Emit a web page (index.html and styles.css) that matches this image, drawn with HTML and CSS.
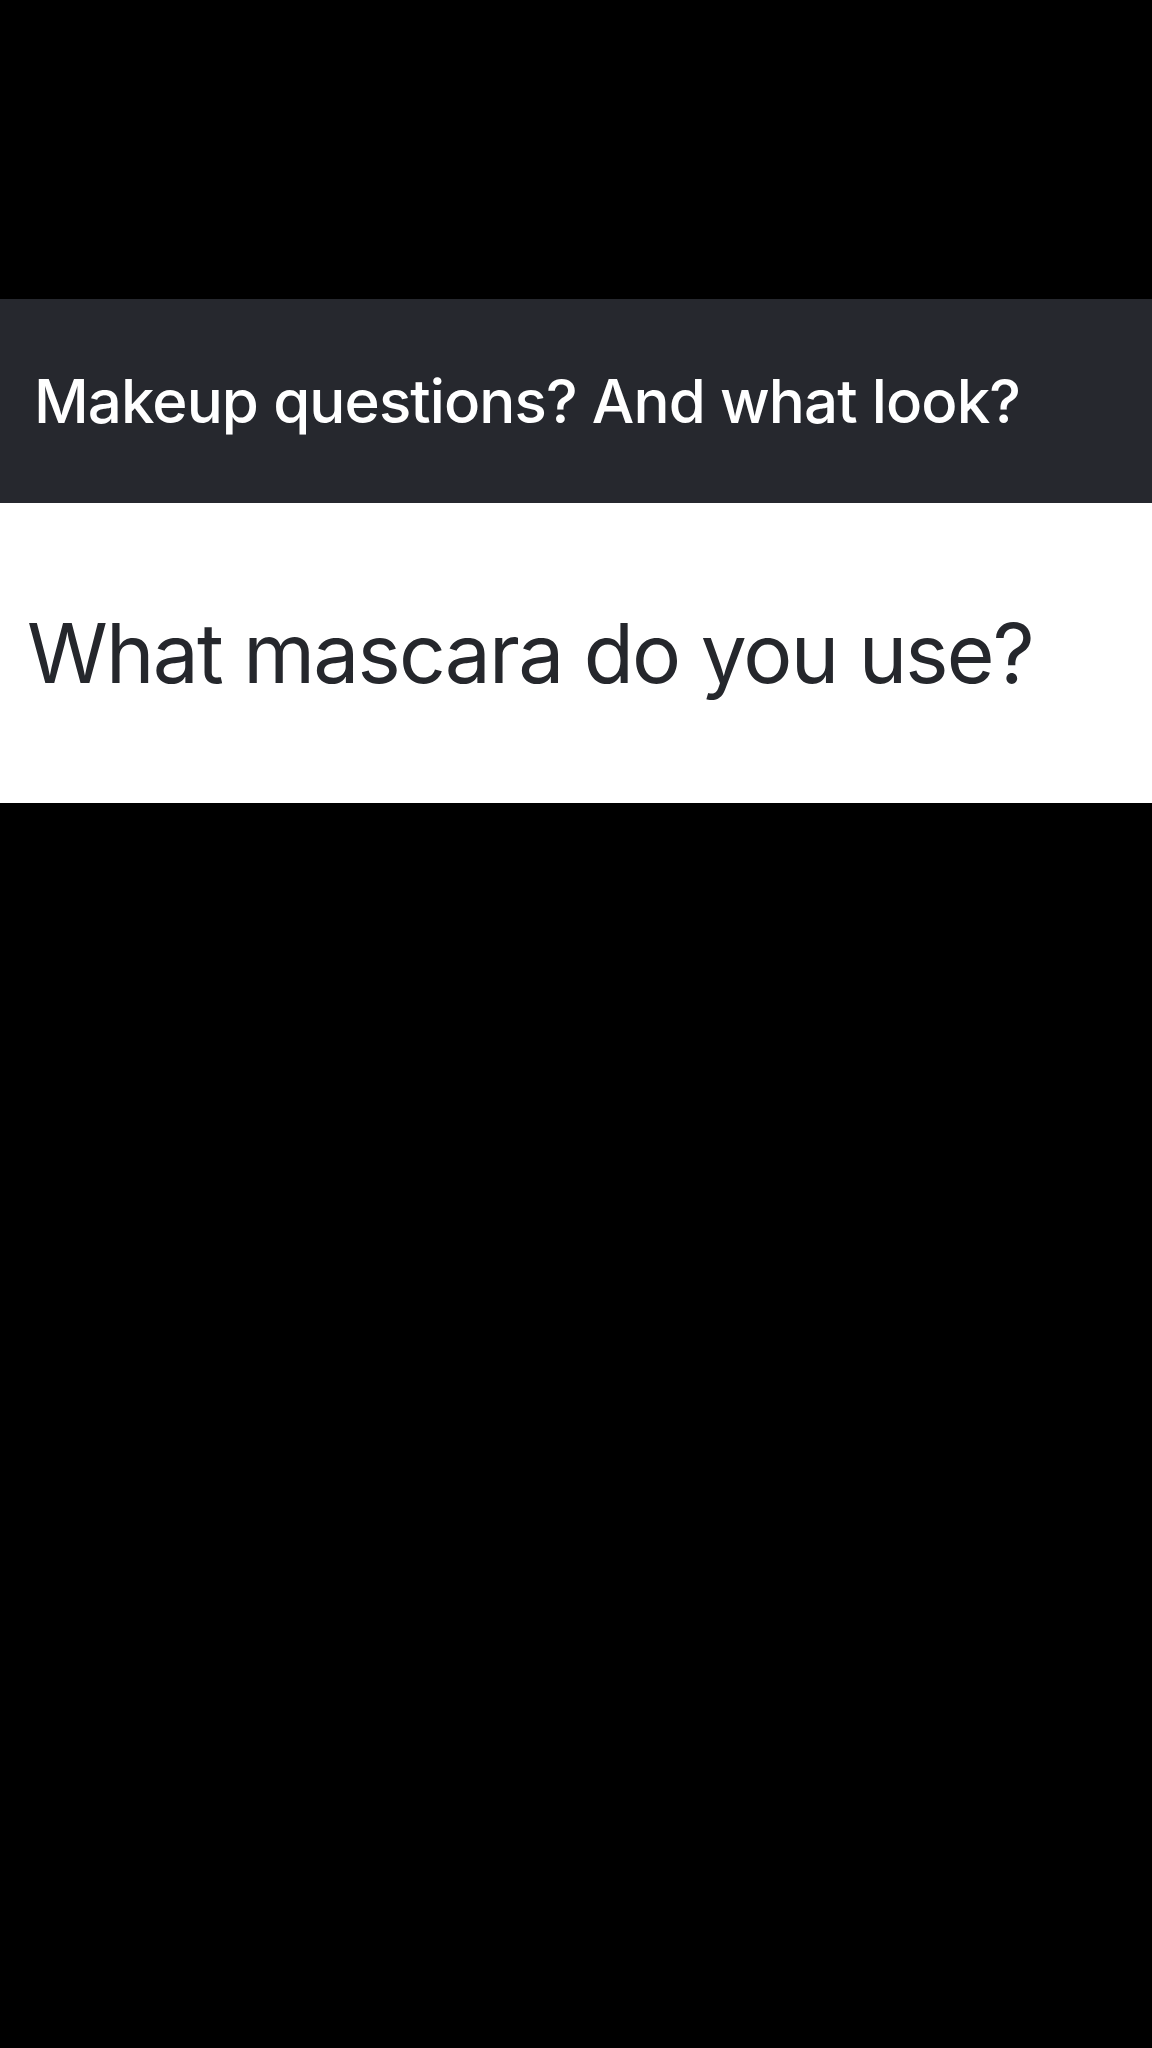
FILE: index.html
```html
<!DOCTYPE html>
<html lang="en">

<head>
    <meta charset="UTF-8" />
    <meta name="viewport" content="width=device-width, initial-scale=1.0" />
    <title>Makeup questions</title>
    <link rel="stylesheet" href="styles.css">
</head>

<body>
    <div class="screen">
        <div class="question-card">
            <div class="card-header">Makeup questions? And what look?</div>
            <div class="card-body">What mascara do you use?</div>
        </div>
    </div>
</body>

</html>
```

FILE: styles.css
```css
body {
    margin: 0;
    background-color: #000000;
    font-family: Inter, "Noto Sans", Arial, sans-serif;
}

.screen {
    width: 1152px;
    height: 2048px;
    padding-top: 299px;
    box-sizing: border-box;
}

.card-header {
    height: 204px;
    display: flex;
    align-items: center;
    padding-left: 34px;
    background-color: #26282e;
    color: #ffffff;
    font-size: 60px;
    font-weight: 500;
    letter-spacing: -0.9px;
}

.card-body {
    height: 300px;
    display: flex;
    align-items: center;
    padding-left: 27px;
    background-color: #ffffff;
    color: #25272c;
    font-size: 82px;
    font-weight: 400;
    letter-spacing: -1.8px;
}
```
